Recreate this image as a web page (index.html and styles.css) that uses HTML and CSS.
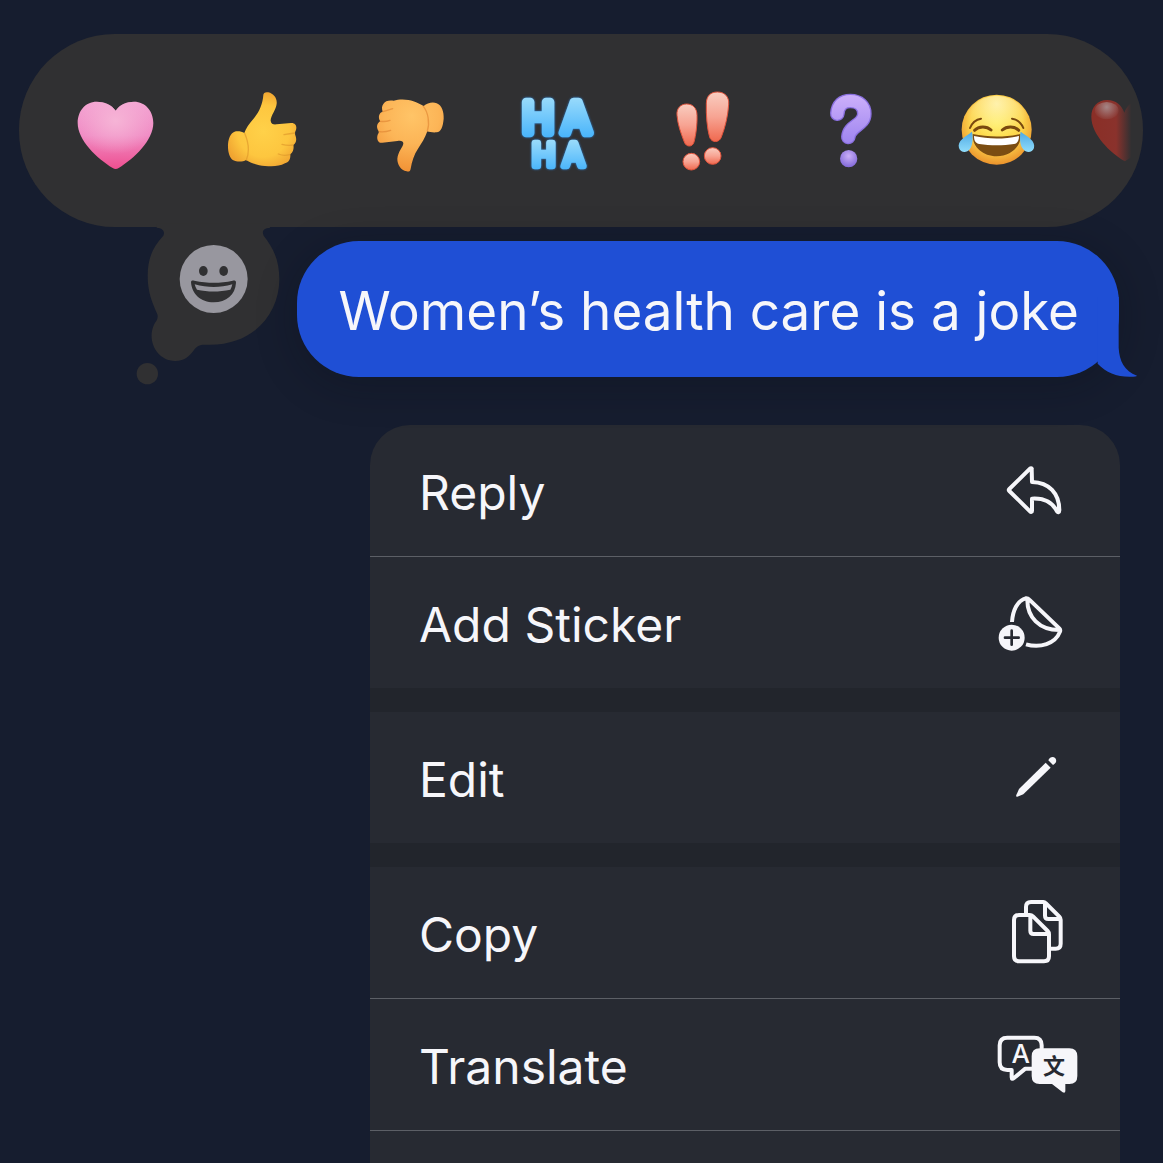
FILE: index.html
```html
<!DOCTYPE html>
<html lang="en">
<head>
<meta charset="utf-8">
<meta name="viewport" content="width=device-width, initial-scale=1">
<title>Messages</title>
<link rel="stylesheet" href="styles.css">
</head>
<body>
<main class="screen">
  <section class="picker" aria-label="Reactions">
    <div class="strip">
      <button class="tapback" type="button" aria-label="Heart">
        <svg viewBox="21 6 288 288">
          <defs>
            <linearGradient id="pink" x1="0" y1="0" x2="0" y2="1"><stop offset="0" stop-color="#f3a3d2"/><stop offset=".5" stop-color="#f08cc4"/><stop offset="1" stop-color="#ee4f90"/></linearGradient>
            <radialGradient id="pinkglow" cx=".5" cy=".28" r=".5"><stop offset="0" stop-color="#f6b4d6"/><stop offset="1" stop-color="#f6b4d6" stop-opacity="0"/></radialGradient>
          </defs>
          <path fill="url(#pink)" d="M167 89C155 71 133 62 110 62C76 62 53 90 53 126C53 178 112 233 158 261Q167 267 176 261C222 233 280 178 280 126C280 90 256 62 222 62C199 62 179 71 167 89Z"/>
          <path fill="url(#pinkglow)" d="M167 89C155 71 133 62 110 62C76 62 53 90 53 126C53 178 112 233 158 261Q167 267 176 261C222 233 280 178 280 126C280 90 256 62 222 62C199 62 179 71 167 89Z"/>
        </svg>
      </button>
      <button class="tapback" type="button" aria-label="Thumbs up">
        <svg viewBox="462 6 288 288">
          <defs><radialGradient id="thumb" gradientUnits="userSpaceOnUse" cx="610" cy="150" r="120"><stop offset="0" stop-color="#ffd149"/><stop offset=".65" stop-color="#fdc63f"/><stop offset="1" stop-color="#f0a431"/></radialGradient></defs>
          <path fill="url(#thumb)" d="M610 42C610 35 617 32 625 34C641 38 652 52 650 68C649 84 631 106 632 119C633 129 640 131 650 130L693 126C708 125 712 138 707 149C704 155 704 158 707 166C711 178 707 187 700 192C702 199 701 213 691 220C692 235 687 243 675 247C658 256 640 257 615 255C592 253 573 246 558 237C549 243 530 243 520 238C509 232 503 213 504 190C506 166 516 153 528 151C538 150 546 152 553 156C557 143 568 128 580 114C598 93 608 69 610 42Z"/>
          <path fill="none" stroke="#e09a2c" stroke-width="4" stroke-linecap="round" opacity=".7" d="M672 161Q690 158 704 156M666 190Q684 195 699 192M655 219Q672 226 689 221M554 157C566 185 568 215 559 237"/>
        </svg>
      </button>
      <button class="tapback" type="button" aria-label="Thumbs down">
        <svg viewBox="3 6 288 288">
          <defs><radialGradient id="down" gradientUnits="userSpaceOnUse" cx="155" cy="105" r="165"><stop offset="0" stop-color="#ffc467"/><stop offset=".5" stop-color="#fcb557"/><stop offset="1" stop-color="#f29336"/></radialGradient></defs>
          <path fill="url(#down)" d="M70 69C75 59 88 57 101 59C120 53 146 55 160 61C171 65 182 71 191 75C202 66 218 62 230 67C246 72 252 94 251 113C249 137 243 153 230 154C218 155 208 153 202 151C195 171 185 187 174 203C162 221 156 240 152 263C151 270 147 273 140 271C122 267 112 251 112 233C114 211 128 200 130 188C130 180 123 178 112 180L67 185C54 187 49 174 53 161C56 155 58 153 55 149C48 138 51 126 61 121C53 109 57 95 68 92C65 84 65 75 70 69Z"/>
          <path fill="none" stroke="#de8230" stroke-width="4" stroke-linecap="round" opacity=".6" d="M69 92Q84 88 98 83M61 121Q77 123 90 118M58 152Q74 154 92 148M190 76C204 93 210 125 202 150"/>
        </svg>
      </button>
      <button class="tapback" type="button" aria-label="Ha ha">
        <svg class="haha" viewBox="444 6 288 288">
          <defs>
            <linearGradient id="ha1" gradientUnits="userSpaceOnUse" x1="0" y1="45" x2="0" y2="170"><stop offset="0" stop-color="#9cdcfb"/><stop offset="1" stop-color="#48b4fb"/></linearGradient>
            <linearGradient id="ha2" gradientUnits="userSpaceOnUse" x1="0" y1="175" x2="0" y2="268"><stop offset="0" stop-color="#9cdcfb"/><stop offset="1" stop-color="#48b4fb"/></linearGradient>
          </defs>
          <g text-anchor="middle">
            <text y="155" font-size="126" fill="url(#ha1)" stroke="url(#ha1)" stroke-width="26"><tspan x="534">H</tspan><tspan x="649">A</tspan></text>
            <text y="256" font-size="92" fill="url(#ha2)" stroke="url(#ha2)" stroke-width="20"><tspan x="551">H</tspan><tspan x="641">A</tspan></text>
          </g>
        </svg>
      </button>
      <button class="tapback" type="button" aria-label="Emphasize">
        <svg viewBox="-15 6 288 288">
          <defs><linearGradient id="bang" x1="0" y1="0" x2="0" y2="1"><stop offset="0" stop-color="#f9cdc0"/><stop offset=".5" stop-color="#f7a493"/><stop offset="1" stop-color="#f0694f"/></linearGradient></defs>
          <g fill="url(#bang)" stroke="#e2543c" stroke-width="3">
            <path d="M51 103C49 82 62 69 80 69C99 69 111 82 111 103C112 132 107 165 102 183C98 199 78 199 73 183C63 158 53 130 51 103Z"/>
            <path d="M139 68C139 46 151 33 172 33C194 33 208 47 206 70C204 105 195 141 184 168C178 186 155 186 149 169C141 141 138 101 139 68Z"/>
            <circle cx="94" cy="242" r="25"/><circle cx="158" cy="225" r="25"/>
          </g>
        </svg>
      </button>
      <button class="tapback" type="button" aria-label="Question">
        <svg viewBox="426 6 288 288">
          <defs><linearGradient id="ask" gradientUnits="userSpaceOnUse" x1="0" y1="40" x2="0" y2="190"><stop offset="0" stop-color="#cdb0fb"/><stop offset="1" stop-color="#9d84ef"/></linearGradient>
          <radialGradient id="dot" cx=".5" cy=".35" r=".65"><stop offset="0" stop-color="#cbb0f8"/><stop offset="1" stop-color="#8168d8"/></radialGradient></defs>
          <g fill="none" stroke-linecap="round" stroke-linejoin="round">
            <path stroke="#8a70df" stroke-width="44" d="M532 98C534 72 548 60 571 60C597 60 613 76 613 98C613 134 568 132 565 168"/>
            <path stroke="url(#ask)" stroke-width="36" d="M532 98C534 72 548 60 571 60C597 60 613 76 613 98C613 134 568 132 565 168"/>
          </g>
          <circle cx="566" cy="233" r="26" fill="url(#dot)"/>
        </svg>
      </button>
      <button class="tapback" type="button" aria-label="Tears of joy">
        <svg viewBox="57 36 288 288">
          <defs>
            <radialGradient id="joy" cx=".5" cy=".4" r=".62"><stop offset="0" stop-color="#ffec55"/><stop offset=".6" stop-color="#fdd44b"/><stop offset="1" stop-color="#e98d2a"/></radialGradient>
            <radialGradient id="joytop" cx=".5" cy=".12" r=".5"><stop offset="0" stop-color="#fff7c4" stop-opacity=".8"/><stop offset="1" stop-color="#fff7c4" stop-opacity="0"/></radialGradient>
            <linearGradient id="tear" x1="0" y1="0" x2="0" y2="1"><stop offset="0" stop-color="#4fa9e4"/><stop offset="1" stop-color="#8fdcfb"/></linearGradient>
          </defs>
          <circle cx="200" cy="176" r="105" fill="url(#joy)"/><circle cx="200" cy="176" r="102" fill="url(#joytop)"/>
          <g fill="none" stroke="#79490f" stroke-linecap="round">
            <path stroke-width="6" d="M120 171C126 156 139 145 153 143M246 143C261 145 274 156 280 171"/>
            <path stroke-width="9" d="M134 178C146 165 170 165 183 177M217 177C230 165 254 165 266 178"/>
          </g>
          <path fill="#7b4d12" d="M128 189C174 199 226 199 271 189C276 226 242 256 200 256C158 256 125 226 128 189Z"/>
          <path fill="#fff" d="M132 195C176 205 223 205 267 195C267 211 261 217 252 219C220 224 180 224 148 219C138 217 132 211 132 195Z"/>
          <path fill="url(#tear)" d="M126 182C130 202 128 223 120 234C110 247 92 245 87 231C81 209 105 198 126 182Z"/>
          <path fill="url(#tear)" d="M272 182C268 202 270 223 279 234C289 247 307 245 312 231C317 209 294 198 272 182Z"/>
        </svg>
      </button>
      <button class="tapback" type="button" aria-label="Red heart">
        <svg viewBox="498 36 288 288">
          <defs>
            <linearGradient id="fade" gradientUnits="userSpaceOnUse" x1="490" y1="0" x2="604" y2="0"><stop offset="0" stop-color="#8a2f27"/><stop offset=".6" stop-color="#8a322c"/><stop offset="1" stop-color="#8a322c" stop-opacity="0"/></linearGradient>
            <radialGradient id="shine" gradientUnits="userSpaceOnUse" cx="530" cy="108" r="42"><stop offset="0" stop-color="#a58585"/><stop offset="1" stop-color="#a58585" stop-opacity="0"/></radialGradient>
          </defs>
          <path fill="url(#fade)" d="M583 125C575 102 557 87 532 87C502 87 484 108 484 137C484 190 540 245 585 271C630 245 680 190 680 137C680 108 662 87 636 87C609 87 591 102 583 125Z"/>
          <ellipse cx="530" cy="119" rx="36" ry="26" fill="url(#shine)"/>
        </svg>
      </button>
    </div>
    <button class="more" type="button" aria-label="More reactions">
      <svg viewBox="0 0 480 540">
        <path fill="#303032" d="M110 40V53C128 54 136 64 130 77C90 120 80 160 84 220C88 260 100 285 112 313C116 326 108 334 102 344C80 392 110 452 165 453C196 453 210 436 222 420C230 409 238 404 254 404C400 412 478 310 478 208C478 150 459 112 431 77C425 64 430 54 450 53V40Z"/>
        <circle cx="82" cy="491" r="32" fill="#303032"/>
        <circle cx="281" cy="207" r="102" fill="#98979f"/>
        <ellipse cx="250" cy="183" rx="13" ry="15" fill="#303032"/><ellipse cx="311" cy="183" rx="13" ry="15" fill="#303032"/>
        <path fill="#303032" d="M213 216C214 211 218 211 223 212C264 220 300 220 338 212C344 211 348 212 348 218C346 254 319 277 281 277C243 277 215 252 213 216Z"/>
        <path fill="#98979f" d="M224 223C263 234 300 234 337 223Q335 233 331 239C297 246 264 246 231 239Q226 232 224 223Z"/>
      </svg>
    </button>
  </section>

  <div class="bubble">
    <p class="message">Women’s health care is a joke</p>
    <svg class="tail" viewBox="198 198 126 240" aria-hidden="true">
      <path fill="#1f4fd5" d="M206 198H269V350C271 390 286 420 324 434Q322 437 306 437C264 438 232 425 206 398Z"/>
    </svg>
  </div>

  <ul class="menu">
    <li><button class="item" type="button"><span class="label">Reply</span>
      <svg class="icon" viewBox="48 -3 252 252"><path class="line" d="M155 56C155 54 152 54 150 56L88 117Q85 120 88 123L150 184C153 187 156 186 156 182V146C190 144 217 157 231 184C234 188 238 187 238 181C238 130 207 97 156 96Z"/></svg>
    </button></li>
    <li class="ruled"><button class="item" type="button"><span class="label">Add Sticker</span>
      <svg class="icon" viewBox="48 3 252 252">
        <path class="line butt" d="M96 126C98 92 112 62 137 55Q143 54 148 59L238 145Q242 149 240 155C226 192 180 205 138 193M142 60C142 110 176 151 240 150"/>
        <circle cx="95" cy="173" r="39" fill="#f6f6fa"/><path stroke="#272a32" stroke-width="8" stroke-linecap="round" d="M75 173H116M95 152V194"/>
      </svg>
    </button></li>
    <li class="spacer" role="separator"></li>
    <li><button class="item" type="button"><span class="label">Edit</span>
      <svg class="icon" viewBox="48 -12 252 252"><g fill="#f6f6fa"><path d="M197 68L212 83L130 163L112 170Q107 171 109 165L117 147Z"/><path d="M205 61C210 50 220 49 226 55C231 62 229 69 219 75Z"/></g></svg>
    </button></li>
    <li class="spacer" role="separator"></li>
    <li><button class="item" type="button"><span class="label">Copy</span>
      <svg class="icon" viewBox="48 18 252 252">
        <path class="line" d="M138 86V66Q138 51 153 51H190Q194 51 198 55L238 95Q242 99 242 104V176Q242 191 227 191H212M195 54V92Q195 102 205 102H240"/>
        <path class="line" d="M117 90H149Q155 90 159 94L203 138Q207 142 207 148V214Q207 229 192 229H117Q102 229 102 214V105Q102 90 117 90ZM151 92V137Q151 147 161 147H206"/>
      </svg>
    </button></li>
    <li class="ruled"><button class="item" type="button"><span class="label">Translate</span>
      <svg class="icon" viewBox="48 9 252 252">
        <path class="line" d="M155 146H136L102 174Q95 180 95 172V150H82Q59 150 59 127V76Q59 53 82 53H163Q185 53 185 76V85"/>
        <path fill="#f6f6fa" d="M179 85H268Q292 85 292 109V168Q292 192 268 192H256V214Q255 221 248 217L216 192H179Q155 192 155 168V109Q155 85 179 85Z"/>
        <text class="latin" x="122" y="130" text-anchor="middle" aria-hidden="true">A</text>
        <text class="han" x="222" y="161" text-anchor="middle" aria-hidden="true">文</text>
      </svg>
    </button></li>
    <li class="ruled rest"></li>
  </ul>
</main>
</body>
</html>
```
FILE: styles.css
```css
* { box-sizing: border-box; }

body {
  margin: 0;
  background: #161d2f;
  color: #f6f6fa;
  font-family: Inter, "Liberation Sans", sans-serif;
}

button {
  border: 0;
  padding: 0;
  background: none;
  color: inherit;
  font: inherit;
  cursor: pointer;
}

svg { display: block; }

.screen {
  display: flex;
  flex-direction: column;
  min-height: 100vh;
  padding: 34px 20px 0 19px;
}

/* Reaction strip */
.picker {
  position: relative;
  border-radius: 96px;
  background: #303032;
}

.strip {
  display: flex;
  height: 193px;
  padding-left: 22px;
  overflow: hidden;
  border-radius: 96px;
}

.tapback {
  display: flex;
  flex: 0 0 147px;
  align-items: center;
  justify-content: center;
}

.tapback svg {
  width: 96px;
  height: 96px;
  overflow: visible;
}

.haha {
  font-family: Inter, sans-serif;
  font-weight: 400;
  stroke-linejoin: round;
  filter: drop-shadow(0 0 1px #2f83d6);
}

.more {
  position: absolute;
  top: 176px;
  left: 101px;
}

.more svg {
  width: 160px;
  height: 180px;
}

/* Message */
.bubble {
  position: relative;
  align-self: flex-end;
  margin: 14px 24px 0 0;
  padding: 38px 40px 34px 42px;
  border-radius: 62px;
  background: #1f4fd5;
  box-shadow: 0 8px 40px rgba(10, 12, 24, 0.3);
}

.message {
  margin: 0;
  font-size: 53px;
  line-height: 64px;
  white-space: nowrap;
}

.tail {
  position: absolute;
  right: -18px;
  bottom: 0;
  width: 42px;
  height: 80px;
}

/* Context menu */
.menu {
  display: flex;
  flex: 1;
  flex-direction: column;
  align-self: flex-end;
  width: 750px;
  max-width: 100%;
  margin: 48px 23px 0 0;
  padding: 0;
  overflow: hidden;
  border-radius: 40px 40px 0 0;
  background: #272a32;
  list-style: none;
}

.item {
  display: flex;
  align-items: center;
  justify-content: space-between;
  width: 100%;
  height: 131px;
  padding: 0 40px 0 49px;
  font-size: 48px;
  text-align: left;
}

.label { padding-top: 4px; }

.ruled { border-top: 1px solid #5c5f66; }

.spacer {
  height: 24px;
  background: #22252c;
}

.rest {
  flex: 1;
  min-height: 32px;
}

.icon {
  width: 84px;
  height: 84px;
}

.line {
  fill: none;
  stroke: #f6f6fa;
  stroke-width: 12;
  stroke-linecap: round;
  stroke-linejoin: round;
}

.butt { stroke-linecap: butt; }

.latin {
  fill: #f6f6fa;
  font-size: 78px;
  font-weight: 500;
}

.han {
  fill: #272a32;
  font-family: "Noto Sans CJK SC", sans-serif;
  font-size: 66px;
  font-weight: 700;
}
```
